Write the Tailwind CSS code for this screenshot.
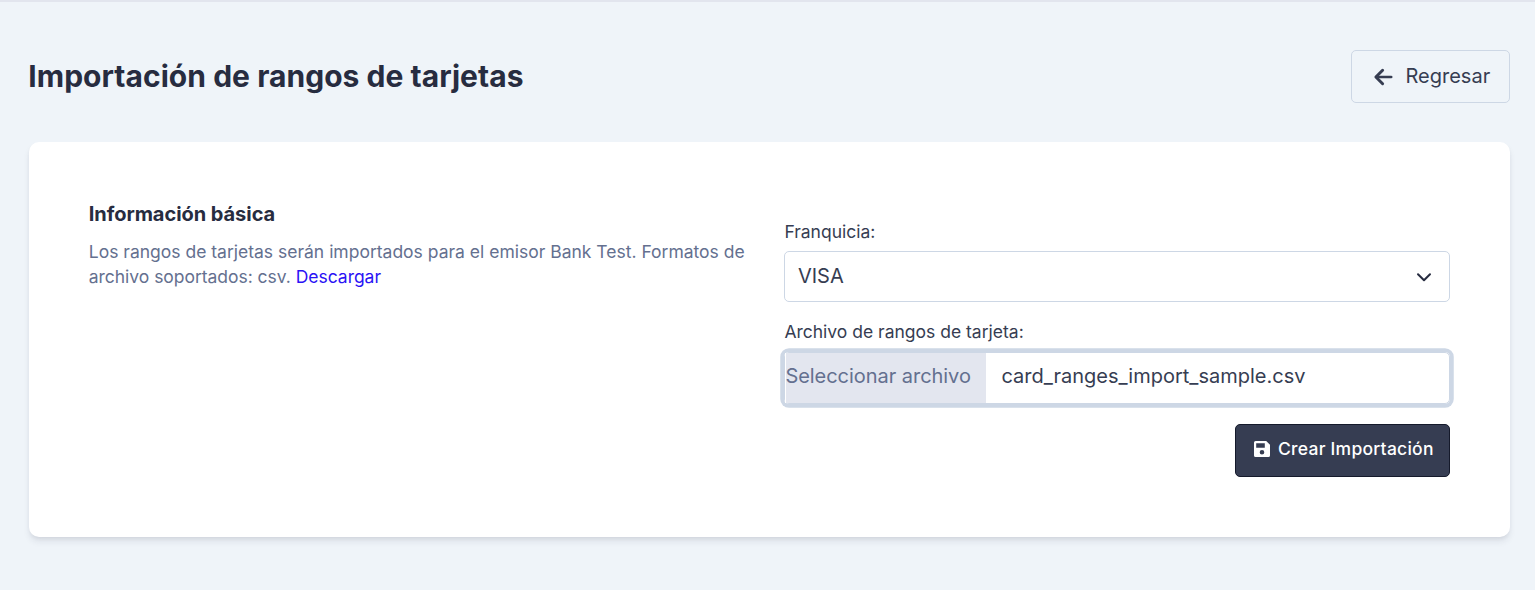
<!DOCTYPE html>
<html lang="es">
<head>
<meta charset="utf-8">
<title>Importación de rangos de tarjetas</title>
<script src="https://cdn.jsdelivr.net/npm/@tailwindcss/browser@4"></script>
</head>
<body class="h-[590px] overflow-hidden border-t-2 border-[#e2e5ee] bg-[#eff4f9] pr-[25px] pl-[28.75px] font-['Inter',sans-serif] text-[#363d52]">
<header class="flex items-start justify-between pt-12">
  <h1 class="-ml-[0.5px] pt-2 text-[30px] leading-[37.5px] font-bold tracking-[0.04px] text-[#272c40]">Importación de rangos de tarjetas</h1>
  <button class="flex h-[53px] w-[159px] items-center rounded-[5px] border border-[#cdd7e5] pb-px pl-[21px] text-[20px]">
    <svg class="mt-px mr-[12.5px] size-5" viewBox="0 0 20 20" fill="none" stroke="currentColor" stroke-width="3" stroke-linecap="round" stroke-linejoin="round"><path d="M9.600 3.300 2.900 10l6.700 6.700"/><path stroke-width="2.600" d="M3.600 10h14.600"/></svg>
    <span>Regresar</span>
  </button>
</header>
<main class="mt-[39px] grid h-[395px] grid-cols-2 gap-[30px] rounded-[10px] bg-white px-[60px] pt-[60px] shadow-[0_5px_7.5px_-1.25px_rgba(39,44,64,0.1),0_2.5px_5px_-2.5px_rgba(39,44,64,0.1)]">
  <section>
    <h2 class="text-[20px] leading-[25px] font-bold tracking-[-0.05px] text-[#272c40]">Información básica</h2>
    <p class="mt-[11.5px] text-[17.5px] leading-[25px] text-[#64708f]">Los rangos de tarjetas serán importados para el emisor Bank Test. Formatos de <span class="tracking-[-0.03px]">archivo soportados: csv. <a class="text-[#2a12f5]">Descargar</a></span></p>
  </section>
  <form class="flex flex-col pt-[17px]">
    <label class="text-[17.5px] leading-[25px]">Franquicia:</label>
    <div class="mt-[7px] flex h-[51px] items-center justify-between rounded-[5px] border border-[#cdd7e5] pr-[15px] pb-px pl-[12.5px] text-[20px]">
      <span>VISA</span>
      <svg class="mt-[2px] size-5" viewBox="0 0 20 20" fill="none" stroke="#272c40" stroke-width="2" stroke-linecap="round" stroke-linejoin="round"><path d="m4 7.300 6 6 6-6"/></svg>
    </div>
    <label class="mt-[17px] text-[17.5px] leading-[25px]">Archivo de rangos de tarjeta:</label>
    <div class="mt-2 flex h-[52px] items-stretch rounded-[5px] border border-[#cdd7e5] text-[20px] leading-[47px] ring-[3.75px] ring-[#cdd7e5]">
      <span class="w-[201px] border-l border-white bg-[#e3e6ef] -indent-px tracking-[-0.04px] text-[#64708f]">Seleccionar archivo</span>
      <span class="pl-[15px]">card_ranges_import_sample.csv</span>
    </div>
    <button type="button" class="mt-[20px] flex h-[53px] w-[215px] items-center self-end rounded-[5px] border border-[#151a2b] bg-[#363d52] pb-[3px] pl-[16px] text-[17.5px] font-medium tracking-[0.25px] text-white">
      <svg class="mr-[6px] size-5 shrink-0" viewBox="0 0 20 20" fill="currentColor" fill-rule="evenodd"><path d="M3.600 2h10.600L18 5.800v10.600q0 1.600-1.600 1.600H3.600Q2 18 2 16.400V3.600Q2 2 3.600 2ZM4.200 4.200v4.500h8.600V4.200ZM10 11a2.300 2.300 0 1 0 0 4.600a2.300 2.300 0 1 0 0-4.600Z"/></svg>
      <span class="whitespace-nowrap">Crear Importación</span>
    </button>
  </form>
</main>
</body>
</html>
